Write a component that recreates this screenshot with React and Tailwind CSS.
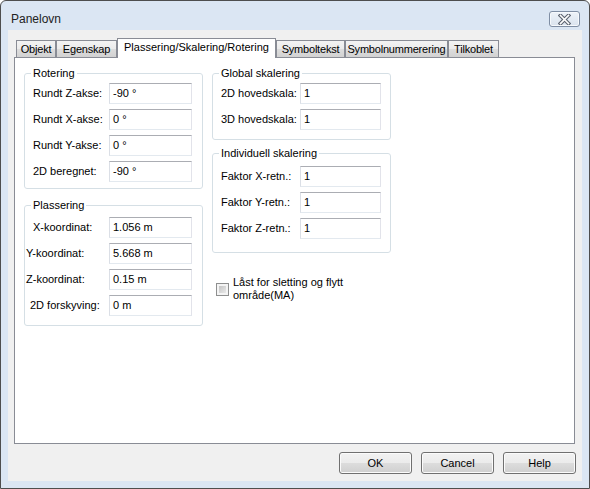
import React from "react";

function Field({ value, w }) {
  return (
    <div
      className={`${w} h-[21px] shrink-0 border border-[#e2e3ea] border-t-[#abadb3] border-l-[#dbdfe6] border-b-[#e3e9ef] bg-white pl-[3px] flex items-center leading-[13px] whitespace-nowrap`}
    >
      {value}
    </div>
  );
}

function Row({ label, value, lw, lp, iw }) {
  return (
    <div className="flex items-center h-[21px]">
      <div className={`${lw} ${lp} shrink-0 leading-[13px] whitespace-nowrap`}>{label}</div>
      <Field value={value} w={iw} />
    </div>
  );
}

function Group({ title, className, children }) {
  return (
    <fieldset className={`border border-[#d5dfe5] rounded-[3px] ${className}`}>
      <legend className="ml-[6px] px-[2px] leading-[13px]">{title}</legend>
      {children}
    </fieldset>
  );
}

function Tab({ label, w, active }) {
  if (active) {
    return (
      <div
        className={`${w} h-[20px] -mb-[1px] relative z-10 border border-b-0 border-[#898c95] bg-white flex items-start justify-center pt-[2px] leading-[13px] whitespace-nowrap`}
      >
        {label}
      </div>
    );
  }
  return (
    <div
      className={`${w} h-[17px] border border-b-0 border-[#898c95] bg-[linear-gradient(#f3f3f3,#ebebeb_50%,#dddddd_50%,#d2d2d2)] flex items-center justify-center leading-[13px] whitespace-nowrap tracking-[-0.2px]`}
    >
      {label}
    </div>
  );
}

function Button({ label }) {
  return (
    <div className="w-[73px] h-[22px] rounded-[3px] border border-[#707070] bg-[linear-gradient(#f2f2f2,#ebebeb_50%,#dddddd_50%,#cfcfcf)] shadow-[inset_0_0_0_1px_#fbfbfb] flex items-center justify-center leading-[13px]">
      {label}
    </div>
  );
}

export default function App() {
  return (
    <div className="w-[590px] h-[489px] border border-[#4e4e4e] rounded-t-[6px] bg-[#dbe6f3] flex flex-col font-['Liberation_Sans',Arial,sans-serif] text-[11px] text-black overflow-hidden">
      {/* Title bar */}
      <div className="h-[29px] shrink-0 flex items-start justify-between pl-[10px] pr-[9px]">
        <div className="mt-[10px] text-[12px] leading-[16px] text-[#222]">Panelovn</div>
        <div className="mt-[10px] w-[31px] h-[16px] rounded-[3px] border border-[#7f8ea4] bg-[linear-gradient(#eef3f9,#dae3ee)] shadow-[inset_0_0_0_1px_#f6f9fc] flex items-center justify-center">
          <svg width="13" height="11" viewBox="0 0 13 11">
            <path d="M2.5 1.5 L10.5 9.5 M10.5 1.5 L2.5 9.5" stroke="#5d6470" strokeWidth="3.8" strokeLinecap="square" />
            <path d="M2.5 1.5 L10.5 9.5 M10.5 1.5 L2.5 9.5" stroke="#ffffff" strokeWidth="1.6" strokeLinecap="square" />
          </svg>
        </div>
      </div>

      {/* Client area */}
      <div className="mx-[7px] h-[451px] shrink-0 bg-[#f0f0f0] flex flex-col pt-[8px] pl-[6px]">
        {/* Tabs */}
        <div className="flex items-end h-[19px] ml-[2px]">
          <Tab label="Objekt" w="w-[40px]" />
          <Tab label="Egenskap" w="w-[61px]" />
          <Tab label="Plassering/Skalering/Rotering" w="w-[159px]" active />
          <Tab label="Symboltekst" w="w-[69px]" />
          <Tab label="Symbolnummerering" w="w-[103px]" />
          <Tab label="Tilkoblet" w="w-[51px]" />
        </div>

        {/* Panel */}
        <div className="w-[561px] h-[387px] border border-[#898c95] bg-white flex gap-[9px] pl-[9px] pt-[9px]">
          {/* Left column */}
          <div className="w-[179px] flex flex-col">
            <Group title="Rotering" className="pb-[6px]">
              <div className="flex flex-col gap-[5px] mt-[3px]">
                <Row label="Rundt Z-akse:" value="-90 °" lw="w-[84px]" lp="pl-[8px]" iw="w-[83px]" />
                <Row label="Rundt X-akse:" value="0 °" lw="w-[84px]" lp="pl-[8px]" iw="w-[83px]" />
                <Row label="Rundt Y-akse:" value="0 °" lw="w-[84px]" lp="pl-[8px]" iw="w-[83px]" />
                <Row label="2D beregnet:" value="-90 °" lw="w-[84px]" lp="pl-[8px]" iw="w-[83px]" />
              </div>
            </Group>
            <Group title="Plassering" className="mt-[10px] pb-[9px]">
              <div className="flex flex-col gap-[5px] mt-[5px]">
                <Row label="X-koordinat:" value="1.056 m" lw="w-[84px]" lp="pl-[8px]" iw="w-[83px]" />
                <Row label="Y-koordinat:" value="5.668 m" lw="w-[84px]" lp="pl-[1px]" iw="w-[83px]" />
                <Row label="Z-koordinat:" value="0.15 m" lw="w-[84px]" lp="pl-[1px]" iw="w-[83px]" />
                <Row label="2D forskyving:" value="0 m" lw="w-[84px]" lp="pl-[5px]" iw="w-[83px]" />
              </div>
            </Group>
          </div>

          {/* Right column */}
          <div className="w-[179px] flex flex-col">
            <Group title="Global skalering" className="pb-[9px]">
              <div className="flex flex-col gap-[5px] mt-[3px]">
                <Row label="2D hovedskala:" value="1" lw="w-[87px]" lp="pl-[8px]" iw="w-[81px]" />
                <Row label="3D hovedskala:" value="1" lw="w-[87px]" lp="pl-[8px]" iw="w-[81px]" />
              </div>
            </Group>
            <Group title="Individuell skalering" className="mt-[7px] pb-[13px]">
              <div className="flex flex-col gap-[5px] mt-[6px]">
                <Row label="Faktor X-retn.:" value="1" lw="w-[87px]" lp="pl-[8px]" iw="w-[81px]" />
                <Row label="Faktor Y-retn.:" value="1" lw="w-[87px]" lp="pl-[8px]" iw="w-[81px]" />
                <Row label="Faktor Z-retn.:" value="1" lw="w-[87px]" lp="pl-[8px]" iw="w-[81px]" />
              </div>
            </Group>
            <div className="mt-[23px] ml-[4px] flex items-center gap-[4px]">
              <div className="w-[13px] h-[13px] shrink-0 border border-[#8e8f8f] bg-[#f4f4f4] p-[2px]">
                <div className="w-full h-full bg-[linear-gradient(135deg,#c4c4c4,#e9e9e9)]" />
              </div>
              <div className="leading-[13px]">
                Låst for sletting og flytt
                <br />
                område(MA)
              </div>
            </div>
          </div>
        </div>

        {/* Buttons */}
        <div className="mt-[8px] flex justify-end gap-[9px] pr-[6px]">
          <Button label="OK" />
          <Button label="Cancel" />
          <Button label="Help" />
        </div>
      </div>
    </div>
  );
}
